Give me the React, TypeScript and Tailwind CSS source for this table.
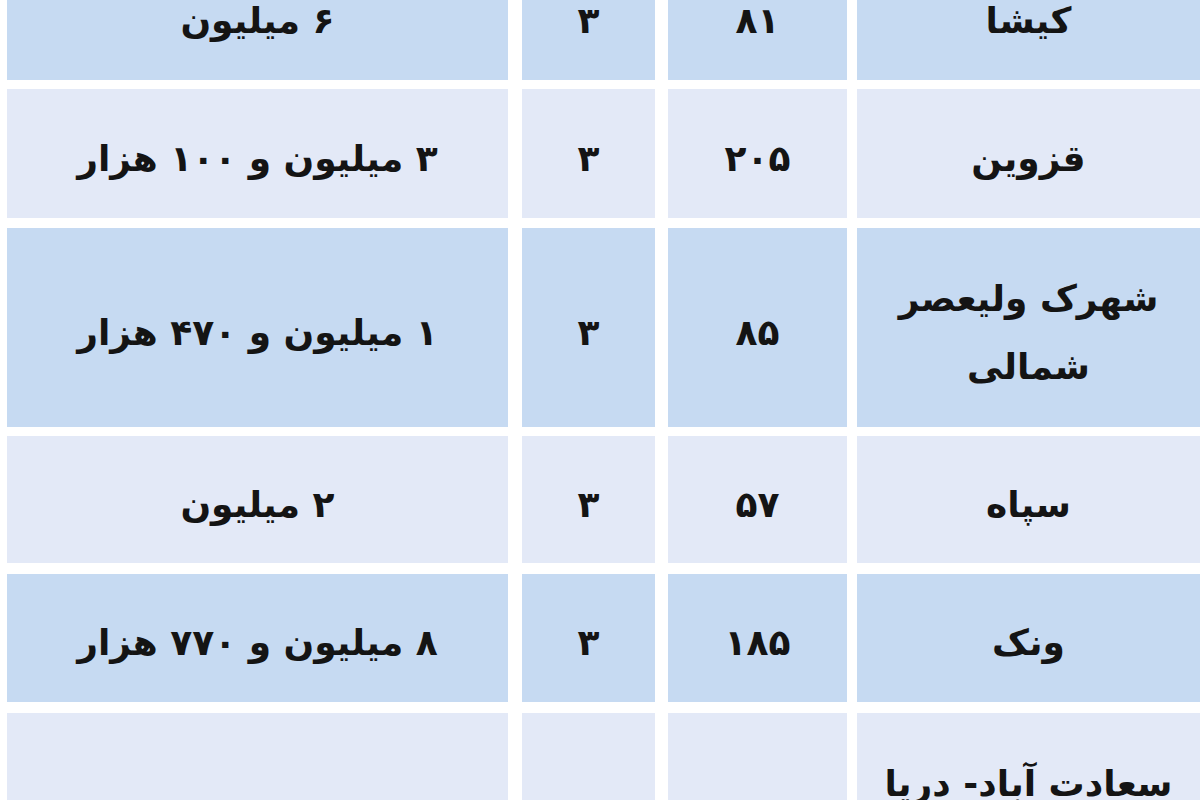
const rows = [
  { name: ["کیشا"], area: "۸۱", rooms: "۳", price: "۶ میلیون", h: "h-[128px]", mt: "-mt-[48px]", blue: true },
  { name: ["قزوین"], area: "۲۰۵", rooms: "۳", price: "۳ میلیون و ۱۰۰ هزار", h: "h-[129px]", mt: "mt-[9px]", blue: false },
  { name: ["شهرک ولیعصر", "شمالی"], area: "۸۵", rooms: "۳", price: "۱ میلیون و ۴۷۰ هزار", h: "h-[199px]", mt: "mt-[10px]", blue: true },
  { name: ["سپاه"], area: "۵۷", rooms: "۳", price: "۲ میلیون", h: "h-[127px]", mt: "mt-[9px]", blue: false },
  { name: ["ونک"], area: "۱۸۵", rooms: "۳", price: "۸ میلیون و ۷۷۰ هزار", h: "h-[128px]", mt: "mt-[11px]", blue: true },
  { name: ["سعادت آباد- دریا", "کنار"], area: "۱۱۲", rooms: "۴", price: "۱۶ میلیون", h: "h-[199px]", mt: "mt-[11px]", blue: false },
];

const Cell = ({ children, className }: { children: React.ReactNode; className: string }) => (
  <div className={`flex items-center justify-center pt-[10px] text-center ${className}`}>{children}</div>
);

export default function App() {
  return (
    <div
      className="w-[1200px] h-[800px] overflow-hidden bg-white text-[#141414]"
      style={{ fontFamily: '"DejaVu Sans", "Noto Sans", sans-serif' }}
    >
      {rows.map((r, i) => {
        const bg = r.blue ? "bg-[#c6daf2]" : "bg-[#e3e9f7]";
        return (
          <div key={i} dir="ltr" className={`flex pl-[7px] ${r.h} ${r.mt}`}>
            <Cell className={`w-[501px] ${bg}`}>
              <span dir="rtl" className="text-[36px] font-bold">{r.price}</span>
            </Cell>
            <Cell className={`ml-[14px] w-[133px] ${bg}`}>
              <span dir="rtl" className="text-[36px] font-bold">{r.rooms}</span>
            </Cell>
            <Cell className={`ml-[13px] w-[179px] ${bg}`}>
              <span dir="rtl" className="text-[36px] font-bold">{r.area}</span>
            </Cell>
            <Cell className={`ml-[10px] flex-1 ${bg}`}>
              <div dir="rtl" className="flex flex-col text-[36px] font-bold leading-[68px]">
                {r.name.map((n, j) => (
                  <span key={j}>{n}</span>
                ))}
              </div>
            </Cell>
          </div>
        );
      })}
    </div>
  );
}
